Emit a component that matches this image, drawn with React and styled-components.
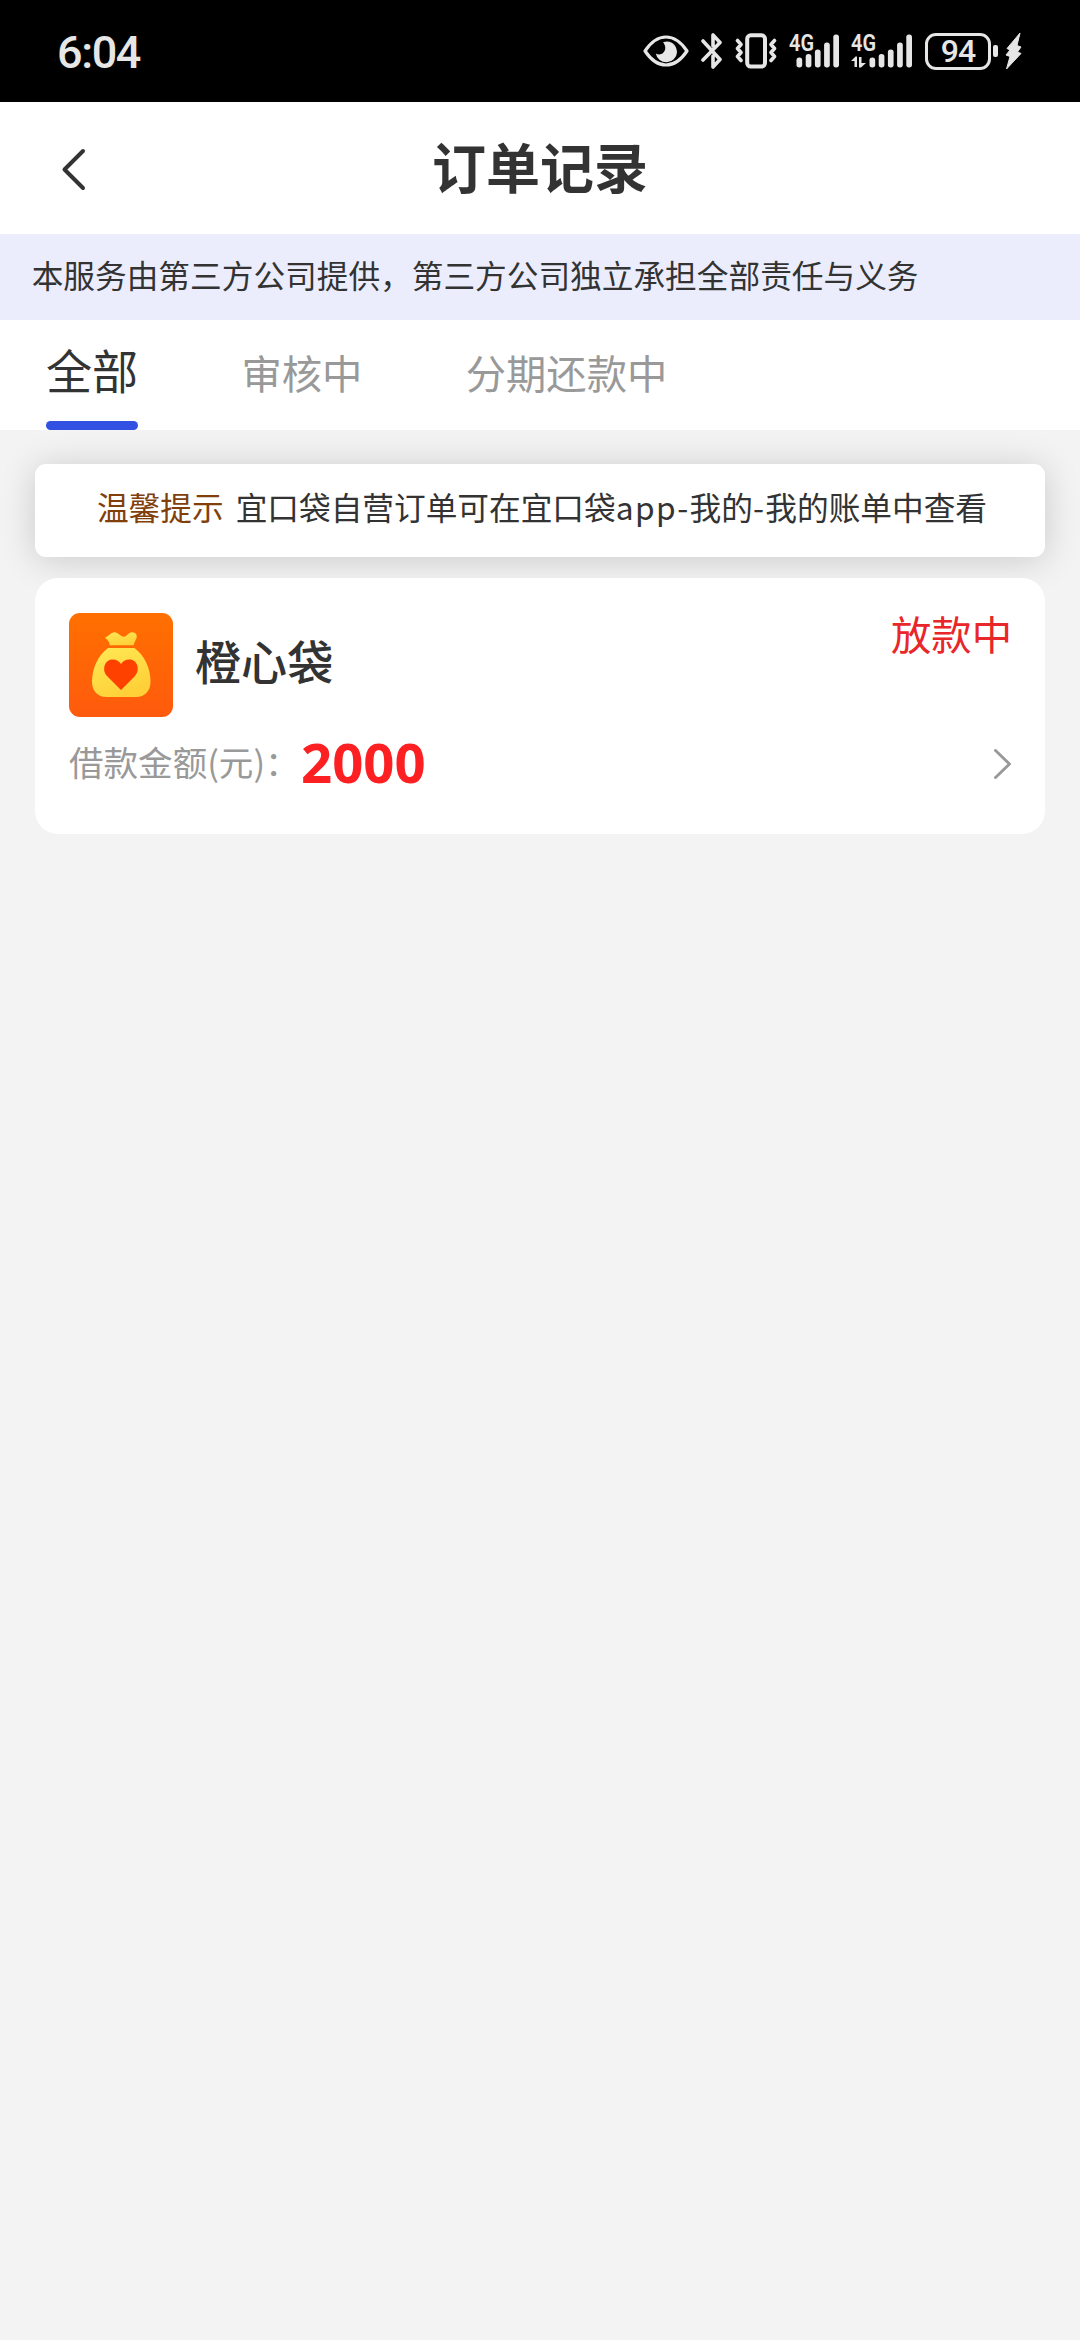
import React from 'react';
import styled, { createGlobalStyle } from 'styled-components';

const GlobalStyle = createGlobalStyle`
  html, body { margin: 0; padding: 0; background: #f3f3f3; }
  * { box-sizing: border-box; }
  body { font-family: "Noto Sans CJK SC", sans-serif; color: #333; }
  svg { display: block; flex: none; }
`;

const Screen = styled.main`
  display: flex;
  flex-direction: column;
  width: 1080px;
  min-height: 2340px;
  background: #f3f3f3;
`;

const StatusBar = styled.div`
  display: flex;
  align-items: center;
  justify-content: space-between;
  height: 102px;
  padding: 0 58px 0 57px;
  background: #000;
  color: #e6e6e6;
`;

const Clock = styled.span`
  font: 500 45px/52px Roboto, sans-serif;
  letter-spacing: -1.4px;
  padding-top: 3px;
`;

const StatusIcons = styled.div`
  display: flex;
  align-items: center;
  height: 38px;
  gap: 12px;
`;

const Power = styled.div`
  display: flex;
  align-items: center;
  gap: 7px;
`;

const Battery = styled.div`
  display: flex;
  align-items: center;
  gap: 2px;
`;

const BatteryShell = styled.div`
  display: flex;
  align-items: center;
  justify-content: center;
  width: 66px;
  height: 37px;
  border: 3px solid #e6e6e6;
  border-radius: 11px;
  font: 500 32px/32px Roboto, sans-serif;
  letter-spacing: -1px;
`;

const BatteryNub = styled.div`
  width: 5px;
  height: 12px;
  border-radius: 2px;
  background: #e6e6e6;
`;

const Header = styled.header`
  display: grid;
  grid-template-columns: 120px 1fr 120px;
  align-items: center;
  height: 132px;
  background: #fff;
`;

const BackButton = styled.button`
  display: flex;
  padding: 2px 0 0 61px;
  border: 0;
  background: none;
`;

const Title = styled.h1`
  margin: 0;
  padding-bottom: 5px;
  text-align: center;
  font-size: 54px;
  line-height: 80px;
  font-weight: 700;
`;

const Notice = styled.p`
  margin: 0;
  height: 86px;
  padding: 0 0 0 31.7px;
  background: #ebedfd;
  font-size: 31.68px;
  line-height: 81px;
  white-space: nowrap;
`;

const Tabs = styled.nav`
  display: flex;
  gap: 103.3px;
  height: 110px;
  padding-left: 46px;
  background: #fff;
`;

const Tab = styled.div`
  display: flex;
  flex-direction: column;
  justify-content: space-between;
  color: ${(p) => (p.$active ? '#333' : '#999')};
  font-size: ${(p) => (p.$active ? '46.08px' : '40.32px')};
  line-height: ${(p) => (p.$active ? '98px' : '103px')};
  &::after {
    content: "";
    display: ${(p) => (p.$active ? 'block' : 'none')};
    height: 9px;
    border-radius: 4.5px;
    background: #3251e2;
  }
`;

const Content = styled.section`
  display: flex;
  flex-direction: column;
  gap: 21px;
  padding: 34px 35px;
`;

const Tip = styled.div`
  display: flex;
  justify-content: center;
  gap: 12px;
  height: 93px;
  padding-left: 4px;
  border-radius: 11px;
  background: #fff;
  box-shadow: 0 3px 35px rgba(0, 0, 0, 0.17);
  font-size: 31.68px;
  line-height: 85px;
  white-space: nowrap;
`;

const TipLabel = styled.span`
  color: #81400b;
`;

const Wide = styled.span`
  letter-spacing: 1.4px;
`;

const OrderCard = styled.article`
  display: flex;
  flex-direction: column;
  height: 256px;
  padding: 35px 33px 0 34px;
  border-radius: 23px;
  background: #fff;
`;

const OrderTop = styled.div`
  display: flex;
  height: 104px;
`;

const OrderName = styled.h2`
  flex: 1;
  margin: 0 0 0 22px;
  font-size: 46.08px;
  line-height: 95px;
  font-weight: 500;
`;

const OrderStatus = styled.span`
  color: #e9262a;
  font-size: 40.32px;
  line-height: 40px;
`;

const OrderBottom = styled.div`
  display: flex;
  align-items: center;
  height: 94px;
`;

const AmountLabel = styled.span`
  width: 232px;
  padding-bottom: 7px;
  color: #999;
  font-size: 34.56px;
  line-height: 50px;
  white-space: nowrap;
`;

const Amount = styled.strong`
  flex: 1;
  padding-bottom: 5px;
  color: #fc2023;
  font-family: "Noto Sans", sans-serif;
  font-size: 54.5px;
  line-height: 60px;
  font-weight: 700;
`;

const EyeIcon = () => (
  <svg width="46" height="32" viewBox="0 0 46 32" fill="none">
    <path d="M2 16C8 7 15 2 23 2s15 5 21 14c-6 9-13 14-21 14S8 25 2 16Z" stroke="#e6e6e6" strokeWidth="3.2" strokeLinejoin="round" />
    <path d="M20 7.200C29 4.500 34 11 34 17.500A10.700 10.700 0 0 1 12.800 18.500c2.200 1.300 5.200 1.300 7.200-.5 3.300-3 2.800-7.500 0-10.800Z" fill="#e6e6e6" />
  </svg>
);

const BluetoothIcon = () => (
  <svg width="22" height="36" viewBox="0 0 22 36" fill="none" stroke="#e6e6e6" strokeWidth="3.600" strokeLinecap="round" strokeLinejoin="round">
    <path d="M2 8 19 26.500l-7 7.500V23M2 27 19 9.500 12 2v11" />
  </svg>
);

const VibrateIcon = () => (
  <svg width="42" height="36" viewBox="0 0 42 36" fill="none" stroke="#e6e6e6" strokeLinecap="round" strokeLinejoin="round">
    <rect x="12.200" y="2.300" width="17.800" height="31.200" rx="3.500" strokeWidth="4" />
    <path d="M2.500 7.500l3.500 4-3.500 4 3.500 4-3.500 4 3.500 4M39.500 7.500l-3.500 4 3.500 4-3.500 4 3.500 4-3.500 4" strokeWidth="3.600" />
  </svg>
);

const BAR_TOPS = [23.5, 20, 15.5, 8.5, 0.5];

const SignalIcon = ({ data }) => {
  const left = data ? 18.5 : 7.5;
  const width = data ? 62 : 50;
  return (
    <svg width={width} height="50" viewBox={`0 -8 ${width} 50`} fill="#e6e6e6">
      <text x="0" y="17" fontFamily="Roboto, sans-serif" fontWeight="600" fontSize="23" textLength="25" lengthAdjust="spacingAndGlyphs">4G</text>
      {data && <path d="M0 27l4.500-4.500H6V33H3.500v-6ZM8 23h2.500v6H15l-5 4.500H8Z" />}
      {BAR_TOPS.map((top, i) => (
        <rect key={top} x={left + i * 9.2} y={top} width="5.700" height={33.500 - top} rx="2.700" />
      ))}
    </svg>
  );
};

const BoltIcon = () => (
  <svg width="17" height="38" viewBox="0 0 17 38">
    <path d="M15 1 2 16.500l3 1.500-4 5 4 1.500L1.500 37 16 21.500l-3.500-1.500 3.500-5-4-1.500Z" fill="#e6e6e6" stroke="#e6e6e6" strokeLinejoin="round" />
  </svg>
);

const BackIcon = () => (
  <svg width="26" height="44" viewBox="0 0 26 44" fill="none">
    <path d="M22 4 3.500 22.500 22 41" stroke="#333" strokeWidth="4" strokeLinecap="round" strokeLinejoin="round" />
  </svg>
);

const ForwardIcon = () => (
  <svg width="19" height="30" viewBox="0 0 19 30" fill="none">
    <path d="M2.500 1.500 16.500 15 2.500 28.500" stroke="#999" strokeWidth="2.900" strokeLinecap="round" strokeLinejoin="round" />
  </svg>
);

const MoneyBagLogo = () => (
  <svg width="104" height="104" viewBox="0 0 104 104">
    <defs>
      <linearGradient id="tile" x1="0" y1="0" x2="0" y2="1">
        <stop offset="0" stopColor="#ff7000" />
        <stop offset="1" stopColor="#ff5a0d" />
      </linearGradient>
      <linearGradient id="bag" x1="0" y1="0" x2="0.500" y2="1">
        <stop offset="0" stopColor="#ffe955" />
        <stop offset="1" stopColor="#ffd038" />
      </linearGradient>
    </defs>
    <rect width="104" height="104" rx="11" fill="url(#tile)" />
    <path d="M36 24.500C39 24 41 20 45 19.200c4-.7 6 4.500 10 4.500 3 0 4-4.300 8-4.400 4 0 5.500 3 4.500 6-.8 2-2.300 4-2.800 7H40.500C41 28.500 38 27 36 24.500Z" fill="url(#bag)" />
    <path d="M39 35h26.500C75 42 81.500 55 81.500 68.500 81.500 78 76 84 67 84H37.500C28.500 84 23 78 23 68.500 23 55 29.500 42 39 35Z" fill="url(#bag)" />
    <path d="M52 77 38 63C32.500 57 35.500 46.500 43.500 46.500c4 0 7 2 8.500 4.500 1.500-2.500 4.500-4.500 8.500-4.500C68.500 46.500 71.500 57 66 63Z" fill="#ff4100" />
  </svg>
);

export default function App() {
  return (
    <Screen>
      <GlobalStyle />
      <StatusBar>
        <Clock>6:04</Clock>
        <StatusIcons>
          <EyeIcon />
          <BluetoothIcon />
          <VibrateIcon />
          <SignalIcon />
          <SignalIcon data />
          <Power>
            <Battery>
              <BatteryShell>94</BatteryShell>
              <BatteryNub />
            </Battery>
            <BoltIcon />
          </Power>
        </StatusIcons>
      </StatusBar>
      <Header>
        <BackButton aria-label="返回"><BackIcon /></BackButton>
        <Title>订单记录</Title>
      </Header>
      <Notice>本服务由第三方公司提供，第三方公司独立承担全部责任与义务</Notice>
      <Tabs>
        <Tab $active>全部</Tab>
        <Tab>审核中</Tab>
        <Tab>分期还款中</Tab>
      </Tabs>
      <Content>
        <Tip>
          <TipLabel>温馨提示</TipLabel>
          <span>宜口袋自营订单可在宜口袋<Wide>app-</Wide>我的<Wide>-</Wide>我的账单中查看</span>
        </Tip>
        <OrderCard>
          <OrderTop>
            <MoneyBagLogo />
            <OrderName>橙心袋</OrderName>
            <OrderStatus>放款中</OrderStatus>
          </OrderTop>
          <OrderBottom>
            <AmountLabel>借款金额(元)：</AmountLabel>
            <Amount>2000</Amount>
            <ForwardIcon />
          </OrderBottom>
        </OrderCard>
      </Content>
    </Screen>
  );
}
